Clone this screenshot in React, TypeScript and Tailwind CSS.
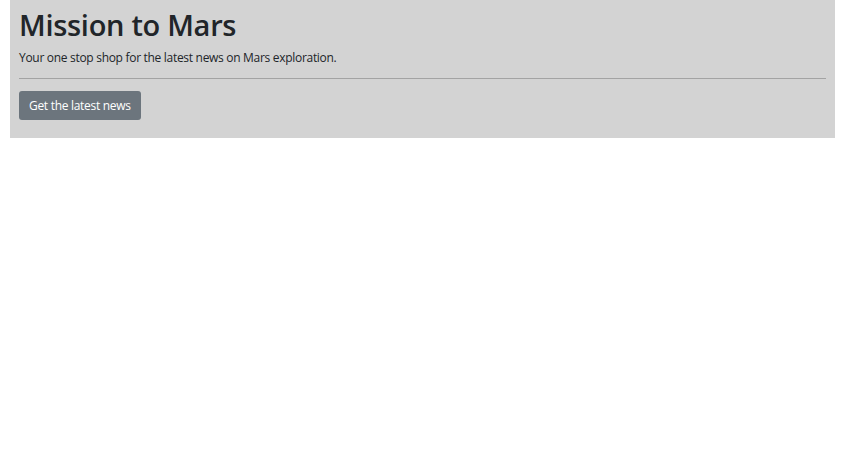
export default function App() {
  return (
    <div className="min-h-[460px] bg-white px-[10px] font-['Open_Sans',sans-serif] text-[#212529]">
      <div className="w-[825px] bg-[#d3d3d3] px-[9px] pt-[5px] pb-[18px]">
        <h1 className="text-[29px] font-semibold leading-[40px] tracking-[-0.3px]">Mission to Mars</h1>
        <p className="mt-[4px] text-[12px] leading-[18px] tracking-[-0.3px]">
          Your one stop shop for the latest news on Mars exploration.
        </p>
        <hr className="mt-[11px] border-t border-[#a3a3a3]" />
        <button className="mt-[12px] h-[29px] rounded-[3px] bg-[#6c757d] px-[10px] text-[12px] tracking-[-0.3px] text-white">
          Get the latest news
        </button>
      </div>
    </div>
  )
}
